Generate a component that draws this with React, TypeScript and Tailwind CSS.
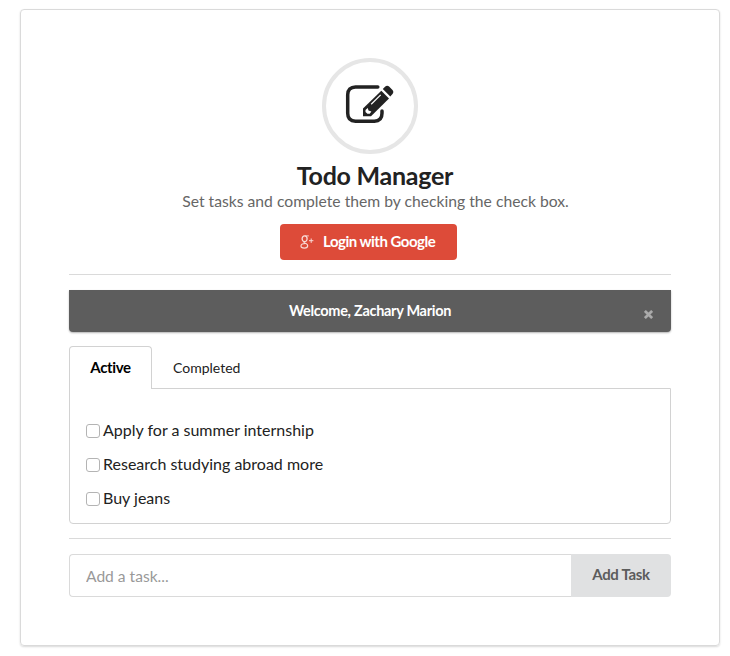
import React, { useState } from "react";

const initialTasks = [
  "Apply for a summer internship",
  "Research studying abroad more",
  "Buy jeans",
];

function EditIcon() {
  return (
    <svg width="50" height="42" viewBox="0 0 50 42" fill="none" aria-hidden="true">
      <path
        d="M32.8 1.9H10.5C5.5 1.9 2.7 4.9 2.7 9.7V28.3C2.7 33.3 5.5 36.2 10.5 36.2H29.4C34.4 36.2 37 33.3 37 28.3V26"
        stroke="#222"
        strokeWidth="3.5"
        strokeLinecap="round"
      />
      <path d="M18 31.2V23.5L36.3 5.7L44 13.4L26 31.2Z" fill="#222" />
      <path d="M37.8 4.1L40.3 1.6C41.4.5 42.9.5 44.1 1.6L47.5 5.1C48.6 6.3 48.6 7.8 47.5 9L45.3 11.5Z" fill="#222" />
      <path d="M26.2 19.2L35.7 9.9" stroke="#fff" strokeWidth="1.2" />
      <path d="M20.5 27V25L22.7 23L23.5 25.4L26.4 26.4L24.7 28.8H22.4Z" fill="#fff" />
    </svg>
  );
}

function GooglePlusIcon() {
  return (
    <svg className="opacity-80" width="14" height="14" viewBox="0 0 14 14" fill="none" stroke="#fff" aria-hidden="true">
      <ellipse cx="4.6" cy="3.8" rx="2.5" ry="2.9" strokeWidth="1.3" />
      <path d="M8.8.9H4.8" strokeWidth=".9" />
      <path d="M4.2 6.6C3.4 7.6 4.9 8 5.9 8.5C7 9.1 7.7 9.8 7.7 10.8C7.7 12.3 6.3 13.2 4.3 13.2C2.3 13.2 1 12.4 1 11C1 9.5 2.6 8.6 5.4 8.5" strokeWidth="1.2" />
      <path d="M11.2 3.5V7.9M9 5.7H13.4" strokeWidth="1" />
    </svg>
  );
}

export default function App() {
  const [tab, setTab] = useState("active");
  const [done, setDone] = useState<string[]>([]);
  const toggle = (task: string) =>
    setDone(done.includes(task) ? done.filter((t) => t !== task) : [...done, task]);
  const visible = initialTasks.filter((t) => done.includes(t) === (tab === "completed"));

  return (
    <div className="h-[656px] w-[730px] overflow-hidden bg-white pt-[9px] pl-5 font-['Lato',sans-serif] text-[#222]">
      <main className="h-[637px] w-[700px] rounded-[4px] border border-[#dadada] px-12 pt-12 shadow-[0_1px_2px_rgba(0,0,0,0.15)]">
        <header className="flex flex-col items-center">
          <div className="flex size-24 items-center justify-center rounded-full border-4 border-[#e6e6e6]">
            <EditIcon />
          </div>
          <h1 className="mt-[5px] ml-[10px] h-8 text-[25px] leading-8 font-bold tracking-[-0.25px] whitespace-nowrap">Todo Manager</h1>
          <p className="ml-[11px] h-[22px] text-[15.7px] leading-[20px] whitespace-nowrap text-[#666]">
            Set tasks and complete them by checking the check box.
          </p>
          <button className="mt-[11px] mr-1 flex h-9 w-[177px] items-center rounded-[4px] bg-[#dd4b39] pl-5 text-[15px] font-bold tracking-[-0.5px] whitespace-nowrap text-white">
            <GooglePlusIcon />
            <span className="ml-[9.5px] -mt-px">Login with Google</span>
          </button>
        </header>
        <hr className="mt-[14px] border-[#dadada]" />
        <section className="relative mt-[15px] flex h-[42px] items-center justify-center rounded-b-[4px] bg-[#5d5d5d] text-[14.5px] font-bold tracking-[-0.3px] text-white shadow-[0_1px_2px_rgba(0,0,0,0.3)]">
          Welcome, Zachary Marion
          <button className="absolute top-[20px] right-[18px]" aria-label="Dismiss">
            <svg width="9" height="9" viewBox="0 0 9 9" stroke="#aaa" strokeWidth="2.7">
              <path d="M.9.9L8.1 8.1M8.1.9L.9 8.1" />
            </svg>
          </button>
        </section>
        <nav className="mt-[14px] flex h-[43px] text-[14px]">
          <button onClick={() => setTab("active")} className="relative z-10 -mb-px h-[43px] w-[83px] rounded-t-[4px] border border-b-0 border-[#d2d2d2] bg-white pb-[2px] text-[15px] font-bold tracking-[-0.35px] text-black">
            Active
          </button>
          <button onClick={() => setTab("completed")} className="ml-[21px] h-[43px]">Completed</button>
        </nav>
        <section className="-mt-px h-[136px] rounded-b-[4px] border border-[#d2d2d2] px-4 pt-[25px]">
          {visible.map((task) => (
            <label key={task} className="flex h-[34px] items-center text-[16px] whitespace-nowrap">
              <input
                type="checkbox"
                checked={done.includes(task)}
                onChange={() => toggle(task)}
                className="mr-[3px] size-[14px] appearance-none rounded-[3px] border border-[#b4b4b4] bg-white checked:bg-[#5d5d5d]"
              />
              <span className="pb-[2px]">{task}</span>
            </label>
          ))}
        </section>
        <hr className="mt-[14px] border-[#dadada]" />
        <form className="mt-[15px] flex h-[43px]" onSubmit={(e) => e.preventDefault()}>
          <input
            placeholder="Add a task..."
            className="w-[502px] rounded-l-[4px] border border-r-0 border-[#dadada] px-4 pt-[2px] text-[15.6px] outline-none placeholder:text-[#999]"
          />
          <button className="h-[43px] w-[100px] rounded-r-[4px] bg-[#e0e1e2] pb-[2px] text-[15px] font-bold tracking-[-0.3px] text-[#5c5c5c]">Add Task</button>
        </form>
      </main>
    </div>
  );
}
